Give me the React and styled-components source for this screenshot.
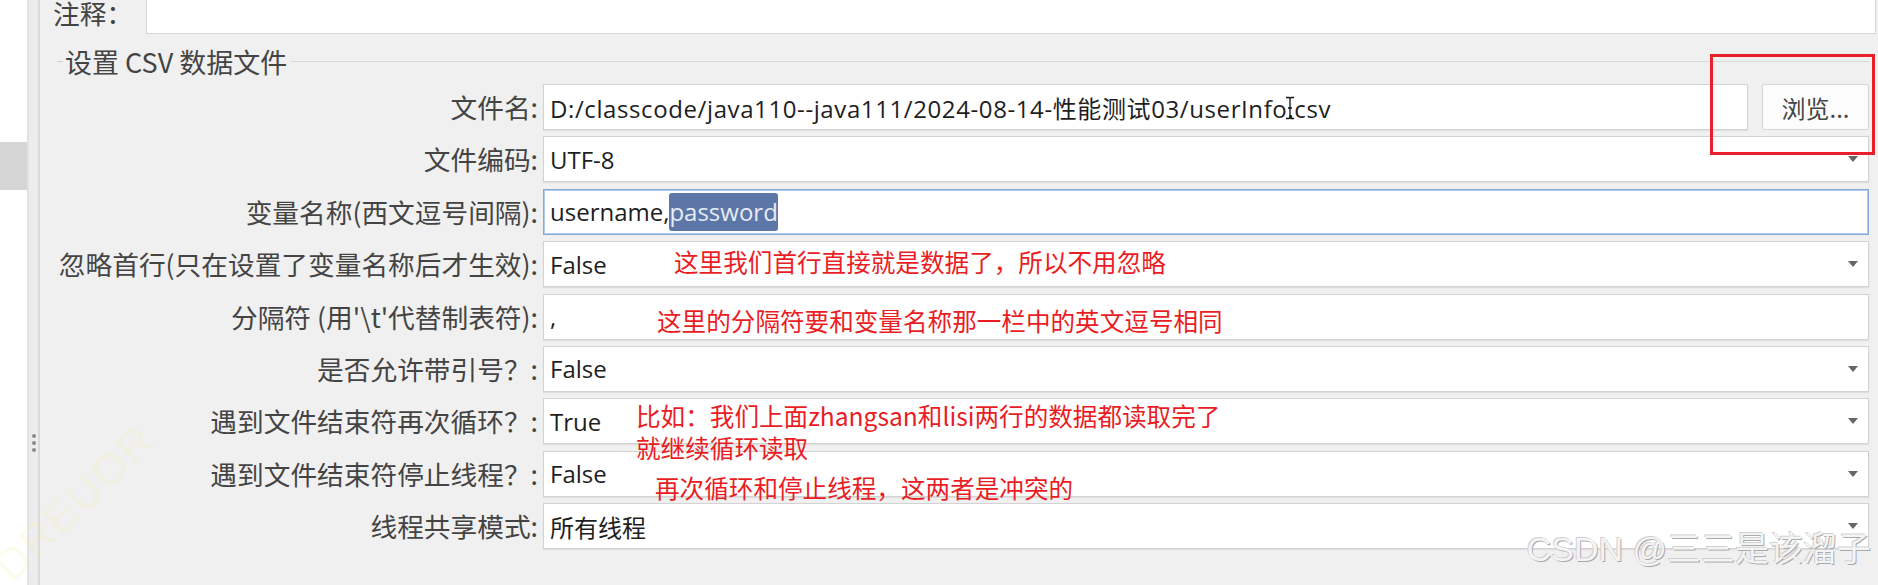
import React from 'react';
import styled, { createGlobalStyle } from 'styled-components';

const GlobalStyle = createGlobalStyle`
  html, body { margin: 0; padding: 0; background: #f0f0f0; }
  body { font-family: "Open Sans", "Noto Sans CJK SC", sans-serif; }
  #root { width: 1878px; height: 585px; overflow: hidden; }
`;

const Page = styled.div`
  position: relative;
  display: flex;
  width: 1878px;
  height: 585px;
  overflow: hidden;
  background: #f0f0f0;
`;

const SideStrip = styled.div`
  flex: none;
  width: 27px;
  background: #fff;
  padding-top: 142px;
  box-sizing: border-box;
`;

const SideTab = styled.div`
  height: 48px;
  background: #d5d5d5;
`;

const Splitter = styled.div`
  flex: none;
  width: 13px;
  box-sizing: border-box;
  background: #ededed;
  border-left: 2px solid #e2e2e2;
  border-right: 2px solid #dadada;
  display: flex;
  flex-direction: column;
  align-items: center;
  padding-top: 434px;
  gap: 3px;
`;

const GripDot = styled.span`
  width: 4px;
  height: 4px;
  border-radius: 50%;
  background: #8a8a8a;
`;

const Main = styled.div`
  flex: 1;
  padding: 0 2px 0 13px;
  box-sizing: border-box;
  display: flex;
  flex-direction: column;
`;

const CommentRow = styled.div`
  display: grid;
  grid-template-columns: 93px 1fr;
  height: 34px;
`;

const Label = styled.div`
  font-family: "Noto Sans CJK SC", "Open Sans", sans-serif;
  font-size: 26.7px;
  color: #444;
  white-space: nowrap;
  line-height: ${(p) => (p.$left ? '26px' : '30px')};
  text-align: ${(p) => (p.$left ? 'left' : 'right')};
  align-self: ${(p) => (p.$left ? 'start' : 'center')};
`;

const CommentBox = styled.div`
  background: #fff;
  border: 1px solid #d6d6d6;
  border-top: none;
`;

const Group = styled.section`
  margin: 7px 7px 0 4px;
`;

const GroupHeader = styled.div`
  height: 40px;
  display: flex;
  align-items: center;
  &::before {
    content: '';
    width: 6px;
    height: 1px;
    background: #d0d0d0;
  }
  &::after {
    content: '';
    flex: 1;
    height: 1px;
    background: #d9d9d9;
  }
`;

const GroupTitle = styled.span`
  font-family: "Noto Sans CJK SC", "Open Sans", sans-serif;
  font-size: 27px;
  color: #444;
  padding: 0 4px 0 2px;
`;

const Rows = styled.div`
  margin-top: 3px;
  display: grid;
  grid-template-columns: 481px 1fr;
  grid-auto-rows: 46px;
  column-gap: 5px;
  row-gap: 6.4px;
`;

const FileCell = styled.div`
  display: flex;
  gap: 14px;
`;

const Field = styled.div`
  position: relative;
  flex: 1;
  min-width: 0;
  height: 46px;
  box-sizing: border-box;
  background: #fff;
  border: 1px solid ${(p) => (p.$focused ? '#84aadb' : '#d3d3d3')};
  box-shadow: ${(p) =>
    p.$focused ? 'inset 0 0 0 1px #b3cbea' : '0 1px 1px rgba(0,0,0,0.07)'};
  display: flex;
  align-items: center;
  padding: 0 6px;
  font-size: 24px;
  color: #1e1e1e;
  white-space: nowrap;
`;

const PathText = styled.span`
  letter-spacing: 0.6px;
`;

const Arrow = styled.span`
  margin-left: auto;
  margin-right: 4px;
  width: 0;
  height: 0;
  border-left: 5px solid transparent;
  border-right: 5px solid transparent;
  border-top: 6px solid #666;
`;

const Selected = styled.span`
  background: #5d76a8;
  color: #e6ebf5;
  border-radius: 3px;
  padding: 2px 0 3px;
`;

const DotWrap = styled.span`
  position: relative;
`;

const IBeam = styled.svg`
  position: absolute;
  left: -2px;
  top: 4px;
  width: 10px;
  height: 24px;
`;

const BrowseButton = styled.button`
  flex: none;
  width: 107px;
  height: 46px;
  box-sizing: border-box;
  background: #fcfcfc;
  border: 1px solid #d6d6d6;
  border-radius: 2px;
  font-family: "Noto Sans CJK SC", "Open Sans", sans-serif;
  font-size: 24px;
  color: #444;
  padding: 0;
`;

const RedBox = styled.div`
  position: absolute;
  left: 1710px;
  top: 54px;
  width: 165px;
  height: 101px;
  box-sizing: border-box;
  border: 3px solid #e8202a;
  pointer-events: none;
`;

const Note = styled.div`
  position: absolute;
  left: ${(p) => p.$x}px;
  top: ${(p) => p.$y}px;
  font-family: "Noto Sans CJK SC", sans-serif;
  font-size: 24.6px;
  line-height: 32px;
  color: #ea1d24;
  white-space: nowrap;
`;

const Watermark = styled.div`
  position: absolute;
  right: 7px;
  bottom: 14px;
  font-family: "Liberation Sans", "Noto Sans CJK SC", sans-serif;
  font-size: 34px;
  color: #f4f4f4;
  text-shadow: 1px 1px 0 #aaa, -1px -1px 0 #d0d0d0;
  white-space: nowrap;
`;

const FaintMark = styled.div`
  position: absolute;
  left: 2px;
  top: 548px;
  font-family: "Liberation Sans", sans-serif;
  font-size: 44px;
  letter-spacing: 2px;
  color: rgba(250, 232, 120, 0.14);
  transform: rotate(-44deg);
  transform-origin: left center;
  white-space: nowrap;
  pointer-events: none;
`;

const rows = [
  { label: '文件编码:', value: 'UTF-8', combo: true },
  { label: '变量名称(西文逗号间隔):', value: 'vars', focused: true },
  { label: '忽略首行(只在设置了变量名称后才生效):', value: 'False', combo: true },
  { label: "分隔符 (用'\\t'代替制表符):", value: ',' },
  { label: '是否允许带引号？:', value: 'False', combo: true },
  { label: '遇到文件结束符再次循环？:', value: 'True', combo: true },
  { label: '遇到文件结束符停止线程？:', value: 'False', combo: true },
  { label: '线程共享模式:', value: '所有线程', combo: true },
];

function FieldValue({ value }) {
  if (value === 'vars') {
    return (
      <span>
        username,<Selected>password</Selected>
      </span>
    );
  }
  return <span>{value}</span>;
}

export default function App() {
  return (
    <>
      <GlobalStyle />
      <Page>
        <SideStrip>
          <SideTab />
        </SideStrip>
        <Splitter>
          <GripDot />
          <GripDot />
          <GripDot />
        </Splitter>
        <Main>
          <CommentRow>
            <Label $left>注释：</Label>
            <CommentBox />
          </CommentRow>
          <Group>
            <GroupHeader>
              <GroupTitle>设置 CSV 数据文件</GroupTitle>
            </GroupHeader>
            <Rows>
              <Label>文件名:</Label>
              <FileCell>
                <Field>
                  <PathText>
                    D:/classcode/java110--java111/2024-08-14-性能测试03/userInfo
                    <DotWrap>
                      .
                      <IBeam viewBox="0 0 10 24">
                        <path
                          d="M1 1.5h3l1 1 1-1h3M5 2.5v19M1 22.5h3l1-1 1 1h3M3 12h4"
                          fill="none"
                          stroke="#111"
                          strokeWidth="1.3"
                        />
                      </IBeam>
                    </DotWrap>
                    csv
                  </PathText>
                </Field>
                <BrowseButton>浏览...</BrowseButton>
              </FileCell>
              {rows.map((r) => (
                <React.Fragment key={r.label}>
                  <Label>{r.label}</Label>
                  <Field $focused={r.focused}>
                    <FieldValue value={r.value} />
                    {r.combo && <Arrow />}
                  </Field>
                </React.Fragment>
              ))}
            </Rows>
          </Group>
        </Main>

        <RedBox />
        <Note $x={674} $y={245}>这里我们首行直接就是数据了，所以不用忽略</Note>
        <Note $x={657} $y={304}>这里的分隔符要和变量名称那一栏中的英文逗号相同</Note>
        <Note $x={636} $y={399}>
          比如：我们上面zhangsan和lisi两行的数据都读取完了
          <br />
          就继续循环读取
        </Note>
        <Note $x={655} $y={471}>再次循环和停止线程，这两者是冲突的</Note>
        <FaintMark>DREUOR</FaintMark>
        <Watermark>CSDN @三三是该溜子</Watermark>
      </Page>
    </>
  );
}
